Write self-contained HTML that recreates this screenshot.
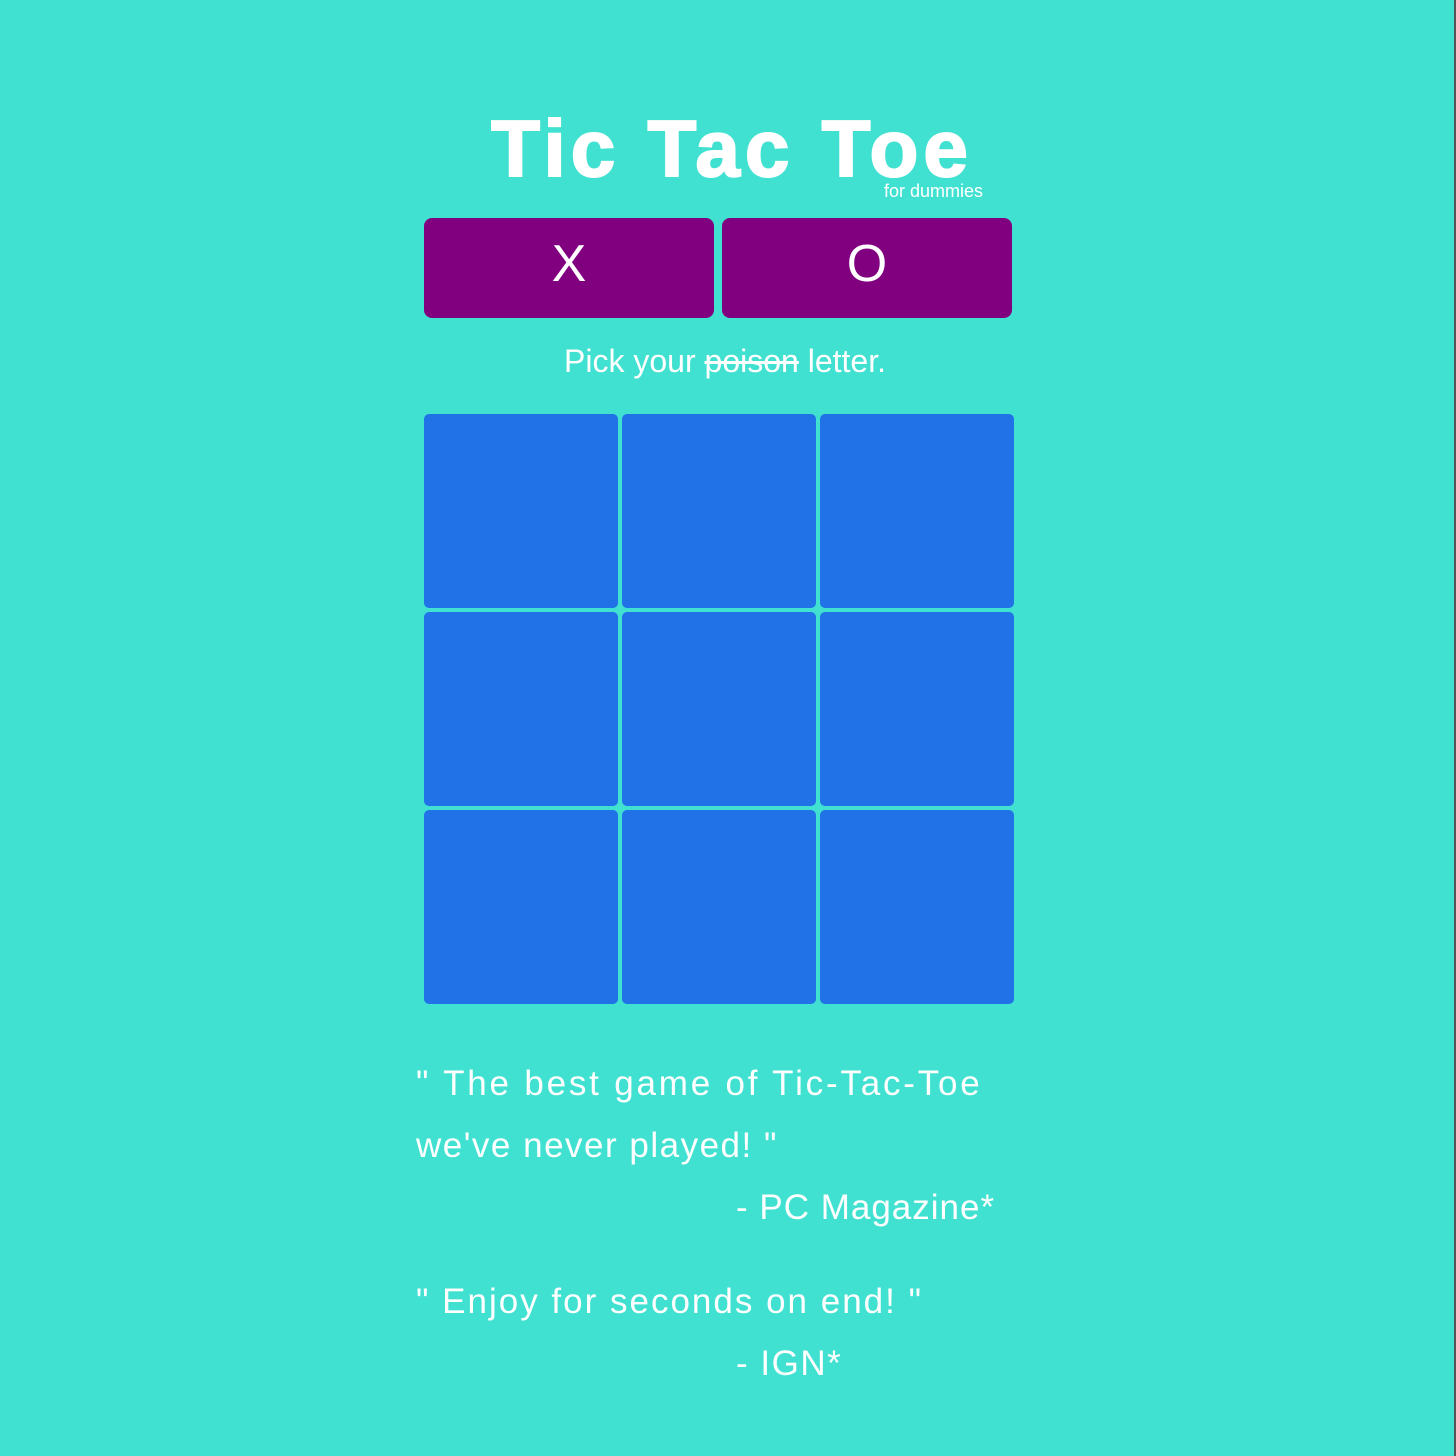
<!DOCTYPE html>
<html><head><meta charset="utf-8"><style>
html,body{margin:0;padding:0}
body{width:1456px;height:1456px;background:#41e1d1;position:relative;overflow:hidden;font-family:"Liberation Sans",sans-serif;color:#fff}
.edge{position:absolute;right:0;top:0;width:2px;height:1456px;background:#555}
.title{position:absolute;left:4px;width:1456px;top:104px;text-align:center;font-weight:700;font-size:80px;line-height:90px;letter-spacing:5px;-webkit-text-stroke:2px #fff}
.sub{position:absolute;left:884px;top:181px;font-size:18px;line-height:20px}
.btn{position:absolute;top:218px;width:290px;height:100px;background:#800080;border-radius:8px;font-size:52px;line-height:92px;text-align:center;font-weight:300}
.pick{position:absolute;left:0;width:1450px;top:342px;text-align:center;font-size:32px;line-height:38px}
.cell{position:absolute;width:194px;height:194px;background:#2172e6;border-radius:5px}
.q{position:absolute;font-size:35px;line-height:40px;white-space:nowrap;letter-spacing:1px}
</style></head><body>
<div class="edge"></div>
<div class="title">Tic Tac Toe</div>
<div class="sub">for dummies</div>
<div class="btn" style="left:424px">X</div>
<div class="btn" style="left:722px">O</div>
<div class="pick">Pick your <s>poison</s> letter.</div>
<div class="cell" style="left:424px;top:414px"></div>
<div class="cell" style="left:622px;top:414px"></div>
<div class="cell" style="left:820px;top:414px"></div>
<div class="cell" style="left:424px;top:612px"></div>
<div class="cell" style="left:622px;top:612px"></div>
<div class="cell" style="left:820px;top:612px"></div>
<div class="cell" style="left:424px;top:810px"></div>
<div class="cell" style="left:622px;top:810px"></div>
<div class="cell" style="left:820px;top:810px"></div>
<div class="q" style="left:416px;top:1064px;letter-spacing:2.8px">" The best game of Tic-Tac-Toe</div>
<div class="q" style="left:416px;top:1126px;letter-spacing:1.5px">we've never played! "</div>
<div class="q" style="left:736px;top:1188px">- PC Magazine*</div>
<div class="q" style="left:416px;top:1282px;letter-spacing:2px">" Enjoy for seconds on end! "</div>
<div class="q" style="left:736px;top:1344px;letter-spacing:1.5px">- IGN*</div>
</body></html>
